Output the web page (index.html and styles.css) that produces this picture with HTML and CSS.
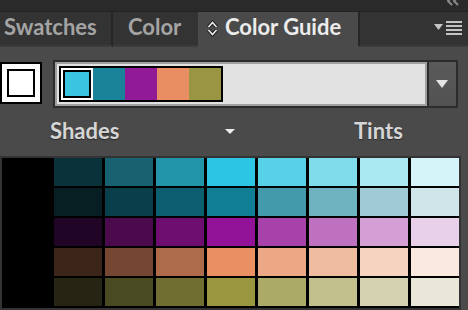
FILE: index.html
```html
<!DOCTYPE html>
<html lang="en">
<head>
  <meta charset="UTF-8">
  <title>Color Guide</title>
  <link rel="stylesheet" href="styles.css">
</head>
<body>
  <div class="titlebar">
    <svg class="collapse" width="14" height="6" viewBox="0 0 14 6">
      <polyline points="6,-3 2,1 6,5" fill="none" stroke="#8a8a8a" stroke-width="2"/>
      <polyline points="12,-3 8,1 12,5" fill="none" stroke="#8a8a8a" stroke-width="2"/>
    </svg>
  </div>

  <div class="tabs">
    <div class="tab tab-swatches">Swatches</div>
    <div class="tab tab-color">Color</div>
    <div class="tab tab-guide active">
      <svg class="updown" width="11" height="17" viewBox="0 0 11 17">
        <polyline points="1.5,7 5.5,2.5 9.5,7" fill="none" stroke="#1e1e1e" stroke-width="3.5"/>
        <polyline points="1.5,10 5.5,14.5 9.5,10" fill="none" stroke="#1e1e1e" stroke-width="3.5"/>
        <polyline points="1.5,7 5.5,2.5 9.5,7" fill="none" stroke="#ececec" stroke-width="1.6"/>
        <polyline points="1.5,10 5.5,14.5 9.5,10" fill="none" stroke="#ececec" stroke-width="1.6"/>
      </svg>
      Color Guide
    </div>
    <div class="tab-fill">
      <svg class="menu-icon" width="28" height="16" viewBox="0 0 28 16">
        <polygon points="0,4 9,4 4.5,10" fill="#c4c4c4"/>
        <rect x="12" y="1" width="16" height="2" fill="#c4c4c4"/>
        <rect x="12" y="5" width="16" height="2" fill="#c4c4c4"/>
        <rect x="12" y="9" width="16" height="2" fill="#c4c4c4"/>
        <rect x="12" y="13" width="16" height="2" fill="#c4c4c4"/>
      </svg>
    </div>
  </div>

  <div class="harmony-row">
    <div class="base-swatch"><div class="base-inner"></div></div>
    <div class="combo">
      <div class="combo-field">
        <div class="strip" id="strip"></div>
      </div>
      <div class="combo-button"><span class="caret-big"></span></div>
    </div>
  </div>

  <div class="labels">
    <span class="label-shades">Shades</span>
    <span class="caret-small"></span>
    <span class="label-tints">Tints</span>
  </div>

  <div class="guide-grid" id="grid"></div>

  <script>
    const harmony = ["#3ac4e0", "#1a8399", "#911a96", "#e88e62", "#999543"];
    const rows = [
      ["#0a323a", "#176170", "#2295ab", "#2cc5e4", "#57d1e7", "#7fdceb", "#aae8f2", "#d5f4f9"],
      ["#071e22", "#083f4a", "#0b5f70", "#107f95", "#429aab", "#70b3c0", "#a0cbd4", "#cfe5ea"],
      ["#200526", "#4a0a4c", "#6e0e71", "#921397", "#a742aa", "#bd71bf", "#d49fd5", "#e9d0ea"],
      ["#3b2418", "#754732", "#ae6b49", "#e98f61", "#eca784", "#f0bc9f", "#f5d3c0", "#f9e9df"],
      ["#262513", "#4a4a22", "#706e31", "#9a9640", "#acaa67", "#c1bf8b", "#d5d3af", "#e9e8d8"]
    ];

    const strip = document.getElementById("strip");
    harmony.forEach((c, i) => {
      const s = document.createElement("div");
      s.className = i === 0 ? "chip selected" : "chip";
      s.style.background = c;
      strip.appendChild(s);
    });

    const grid = document.getElementById("grid");
    rows.forEach((row) => {
      const black = document.createElement("div");
      black.className = "cell";
      grid.appendChild(black);
      row.forEach((c) => {
        const cell = document.createElement("div");
        cell.className = "cell";
        cell.style.background = c;
        grid.appendChild(cell);
      });
    });
  </script>
</body>
</html>
```

FILE: styles.css
```css
body {
  margin: 0;
  background-color: #4a4a4a;
  font-family: Lato, "DejaVu Sans", sans-serif;
  font-weight: 700;
  font-size: 22px;
  overflow: hidden;
}

.titlebar {
  height: 11px;
  background-color: #2a2a2a;
  border-bottom: 1px solid #232323;
  display: flex;
  justify-content: flex-end;
  overflow: hidden;
}

.collapse {
  margin-right: 8px;
}

.tabs {
  display: flex;
  height: 35px;
}

.tab {
  height: 30px;
  line-height: 30px;
  padding-bottom: 3px;
  background-color: #333333;
  color: #a4a4a4;
  border-bottom: 2px solid #3c3c3c;
  white-space: nowrap;
}

.tab-swatches {
  width: 107px;
  padding-left: 4px;
  border-right: 2px solid #262626;
}

.tab-color {
  width: 70px;
  padding-left: 15px;
}

.tab.active {
  display: flex;
  align-items: center;
  gap: 7px;
  width: 151px;
  padding-left: 9px;
  background-color: #4a4a4a;
  color: #ececec;
  border-bottom: 2px solid #4a4a4a;
  border-right: 2px solid #262626;
}

.updown {
  margin-top: 2px;
}

.tab-fill {
  flex: 1;
  height: 33px;
  background-color: #333333;
  border-bottom: 2px solid #3c3c3c;
  display: flex;
  justify-content: flex-end;
  align-items: flex-start;
  padding-right: 6px;
}

.menu-icon {
  margin-top: 8px;
}

.harmony-row {
  display: flex;
  align-items: flex-start;
  gap: 11px;
  margin-top: 13px;
  height: 48px;
}

.base-swatch {
  margin-top: 2px;
  border: 2px solid #000;
  background-color: #fff;
  padding: 5px;
}

.base-inner {
  width: 24px;
  height: 24px;
  border: 2px solid #000;
  background-color: #fff;
}

.combo {
  display: flex;
  width: 401px;
  padding: 2px;
  background-color: #2c2c2c;
}

.combo-field {
  flex: 1;
  height: 36px;
  padding: 2px;
  border: 2px solid #a0a0a0;
  background-color: #e2e2e2;
}

.strip {
  display: inline-flex;
  border: 2px solid #000;
}

.chip {
  width: 32px;
  height: 32px;
}

.chip.selected {
  box-shadow: inset 0 0 0 2px #fff, inset 0 0 0 4px #000;
}

.combo-button {
  width: 27px;
  margin-left: 2px;
  background: linear-gradient(#5a5a5a, #525252);
  display: flex;
  justify-content: center;
  align-items: center;
}

.caret-big {
  width: 0;
  height: 0;
  border-left: 6px solid transparent;
  border-right: 6px solid transparent;
  border-top: 8px solid #e4e4e4;
  margin-right: 2px;
}

.labels {
  display: flex;
  align-items: flex-start;
  height: 38px;
  padding-top: 10px;
  line-height: 26px;
  color: #d6d6d6;
  text-shadow: 0 1px 1px rgba(0, 0, 0, 0.45);
}

.label-shades {
  width: 175px;
  margin-left: 50px;
}

.caret-small {
  margin-top: 11px;
  width: 0;
  height: 0;
  border-left: 5px solid transparent;
  border-right: 5px solid transparent;
  border-top: 5px solid #ededed;
}

.label-tints {
  margin-left: 119px;
}

.guide-grid {
  display: grid;
  grid-template-columns: repeat(9, 48px);
  grid-auto-rows: 28px;
  column-gap: 3px;
  row-gap: 2px;
  width: 456px;
  padding: 0 0 2px 1px;
  background-color: #000;
  border: 2px solid #333333;
}

.cell {
  background-color: #000;
}
```
